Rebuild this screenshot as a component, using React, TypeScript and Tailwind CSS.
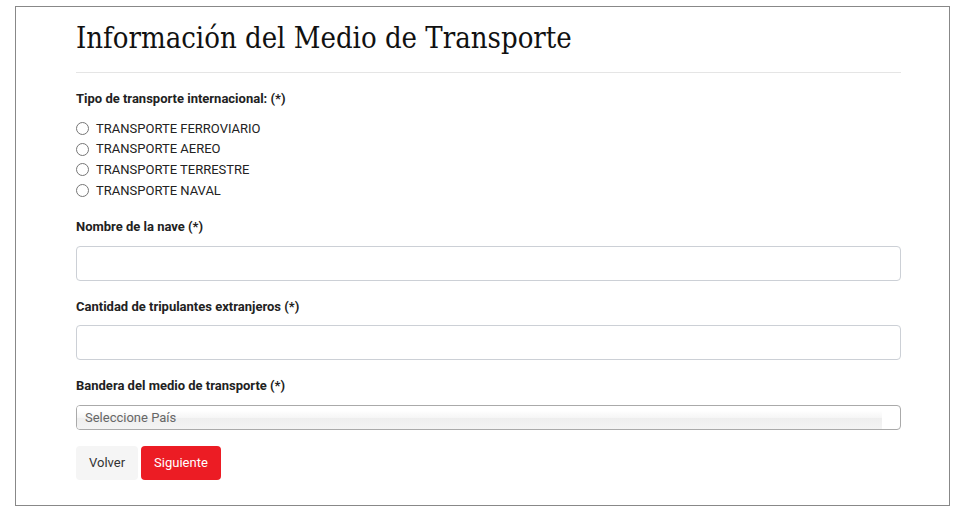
import React from 'react';

const tipos = [
  'TRANSPORTE FERROVIARIO',
  'TRANSPORTE AEREO',
  'TRANSPORTE TERRESTRE',
  'TRANSPORTE NAVAL',
];

const Label: React.FC<{ children: React.ReactNode; className?: string }> = ({ children, className }) => (
  <label className={`block text-[13px] leading-[16px] font-bold text-[#222] ${className ?? ''}`}>{children}</label>
);

export default function App() {
  return (
    <div className="w-[968px] h-[517px] bg-white pt-[6px] pl-[15px]" style={{ fontFamily: 'Roboto, "Liberation Sans", sans-serif' }}>
      <div className="w-[935px] h-[500px] border border-[#888] pl-[60px] pr-[48px]">
        {/* Header */}
        <h1
          className="pt-[13px] text-[29px] leading-[36px] text-[#111] border-b border-[#e5e5e5] pb-[16px]"
          style={{ fontFamily: '"DejaVu Serif Condensed", "DejaVu Serif", serif', fontStretch: 'condensed' }}
        >
          Información del Medio de Transporte
        </h1>

        {/* Tipo de transporte */}
        <Label className="mt-[18px]">Tipo de transporte internacional: (*)</Label>
        <div className="mt-[11px] flex flex-col">
          {tipos.map((t) => (
            <label key={t} className="flex items-center h-[20.7px] text-[13px] text-[#222]">
              <input type="radio" name="tipo" className="m-0 w-[13px] h-[13px] mr-[7px]" />
              {t}
            </label>
          ))}
        </div>

        {/* Nombre de la nave */}
        <Label className="mt-[18px]">Nombre de la nave (*)</Label>
        <input
          type="text"
          className="mt-[11px] block w-full h-[35px] border border-[#ccd0d6] rounded-[4px] outline-none"
        />

        {/* Cantidad de tripulantes */}
        <Label className="mt-[18px]">Cantidad de tripulantes extranjeros (*)</Label>
        <input
          type="text"
          className="mt-[10px] block w-full h-[35px] border border-[#ccd0d6] rounded-[4px] outline-none"
        />

        {/* Bandera */}
        <Label className="mt-[18px]">Bandera del medio de transporte (*)</Label>
        <div className="mt-[11px] flex h-[25px] border border-[#aaa] rounded-[4px] overflow-hidden bg-white">
          <div className="flex-1 flex items-center pl-[8px] text-[13px] text-[#666] bg-[linear-gradient(#fff_20%,#f6f6f6_50%,#eee_52%,#f4f4f4_100%)]">
            Seleccione País
          </div>
          <div className="w-[18px]" />
        </div>

        {/* Botones */}
        <div className="mt-[16px] flex gap-[3px]">
          <button className="h-[34px] px-[13px] rounded-[4px] bg-[#f5f5f5] text-[13px] text-[#333]">Volver</button>
          <button className="h-[34px] px-[13px] rounded-[4px] bg-[#ec1c24] text-[13px] text-white">Siguiente</button>
        </div>
      </div>
    </div>
  );
}
